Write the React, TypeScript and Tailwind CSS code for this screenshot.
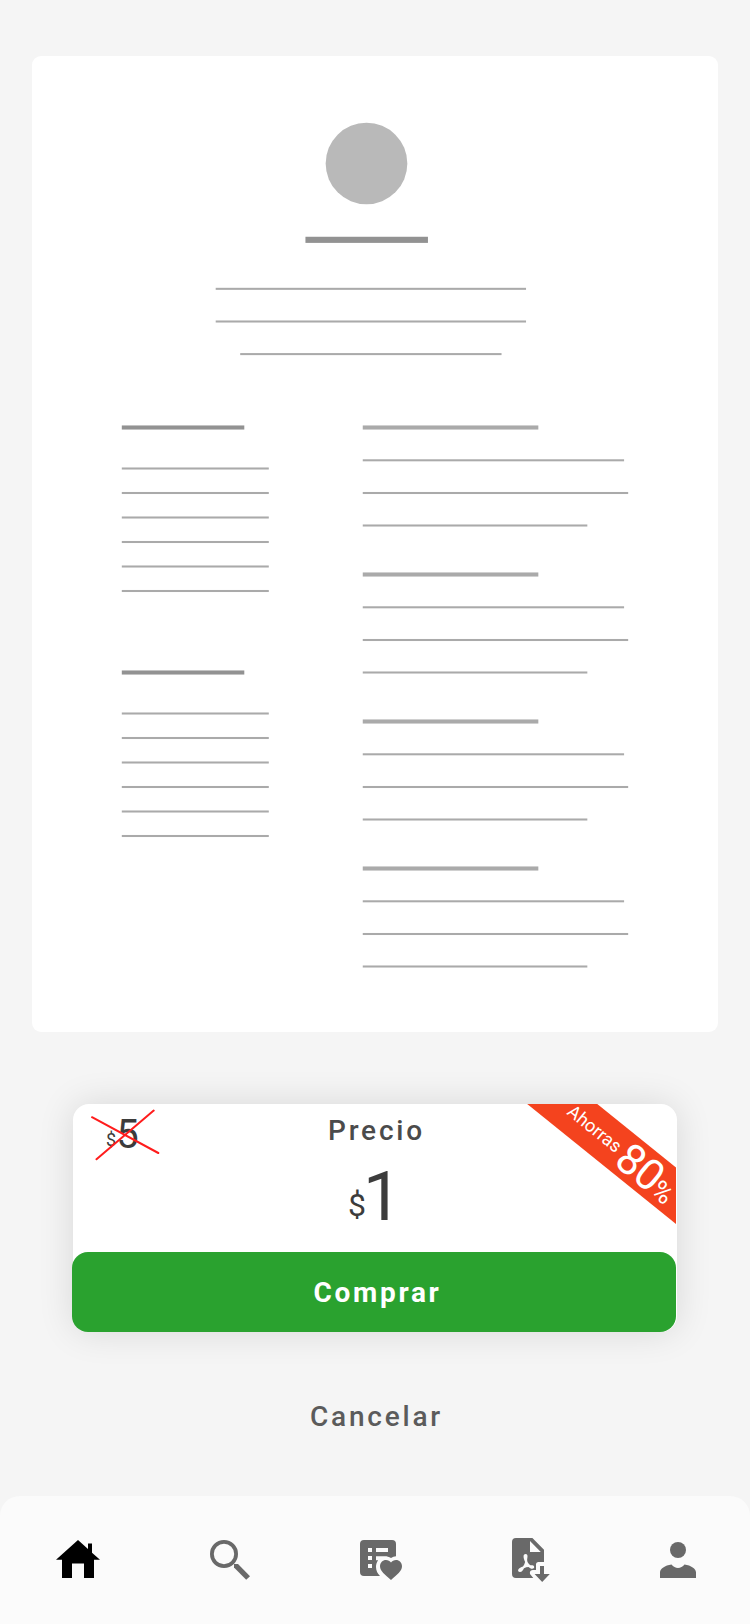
const U = 49 / 12;
const LEFT = 121.8;
const RIGHT = 362.75;

type BarProps = { x: number; y: number; w: number; h?: number; fill?: string };

function Bar({ x, y, w, h = 0.5, fill = "#aaaaaa" }: BarProps) {
  return <rect x={x} y={y - (h * U) / 2} width={w * U} height={h * U} fill={fill} />;
}

function ResumePreview() {
  return (
    <svg viewBox="32 56 686 976" width="686" height="976" className="block" aria-hidden="true">
      <circle cx="366.5" cy="163.5" r={10 * U} fill="#b9b9b9" />
      <Bar x={305.45} y={239.83} w={30} h={1.5} fill="#929292" />
      <Bar x={215.7} y={288.83} w={76} />
      <Bar x={215.7} y={321.5} w={76} />
      <Bar x={240.2} y={354.1} w={64} />
      {[427.5, 672.5].map((y) => (
        <g key={y}>
          <Bar x={LEFT} y={y} w={30} h={1} fill="#929292" />
          {[0, 1, 2, 3, 4, 5].map((i) => (
            <Bar key={i} x={LEFT} y={y + 41 + i * 24.5} w={36} />
          ))}
        </g>
      ))}
      {[427.5, 574.5, 721.5, 868.5].map((y) => (
        <g key={y}>
          <Bar x={RIGHT} y={y} w={43} h={1} />
          <Bar x={RIGHT} y={y + 32.8} w={64} />
          <Bar x={RIGHT} y={y + 65.5} w={65} />
          <Bar x={RIGHT} y={y + 98} w={55} />
        </g>
      ))}
    </svg>
  );
}

const icons = [
  {
    name: "Inicio",
    cls: "text-black",
    body: <path d="M28 10 6 29.700h6V48h10V33.500h12V48h10V29.700h6l-8-7V13.500h-4v5.500z" />,
  },
  {
    name: "Buscar",
    cls: "text-[#696969]",
    body: (
      <>
        <circle cx="24" cy="24" r="12.1" fill="none" stroke="currentColor" strokeWidth="3.8" />
        <path d="M34 34h4l12 12.200-3.800 3.600L34 37.500z" />
      </>
    ),
  },
  {
    name: "Favoritos",
    cls: "text-[#696969]",
    body: (
      <>
        <path
          fillRule="evenodd"
          d="M14 10h28a4 4 0 0 1 4 4v12.300a13 13 0 0 0-5 1.700c-2-1.200-4-1.700-6-1.700H26v4h2.200C26.600 32.400 26 34.800 26 37c0 3.500 1.500 6.500 4 9H14a4 4 0 0 1-4-4V14a4 4 0 0 1 4-4zM18 18v4h4v-4zm8 0v4h12v-4zm-8 8v4h4v-4zm0 8v4h4v-4z"
        />
        <path d="M41 50C35 44.600 30 41 30 36.200 30 32.700 32.700 30 36 30c2 0 3.900 1 5 2.500C42.100 31 44 30 46 30c3.300 0 6 2.700 6 6.200C52 41 47 44.600 41 50z" />
      </>
    ),
  },
  {
    name: "Descargas",
    cls: "text-[#696969]",
    body: (
      <>
        <path
          fillRule="evenodd"
          d="M16 8h16.400L44 19.800V32h-5.500q-2.500 0-2.500 2.500V40h-3.200c-2.800 0-3.800 3-2 5l2.500 3H16a4 4 0 0 1-4-4V12a4 4 0 0 1 4-4zM30 11v11h10.800z"
        />
        <path
          d="M25.500 24c1.900 0 2.300 1.700 1.900 3.600-.3 1.500-.4 2.600-.1 3.700.6 1.700 1.700 3.100 3.200 4 2.100-.1 3.700.2 3.700 1.700 0 1.700-1.900 2.200-3.900 1.200l-1.800-1.100c-1.500.1-3.100.5-4.500 1.100-.8 1.600-2 3.900-4.100 3.900-1.500 0-2.200-1.300-1.600-2.500.8-1.600 2.800-2.100 4.700-3 .9-1.400 1.700-3 2.100-4.700-1-2.300-1.800-4.500-1.500-6.100.2-1.100.9-1.800 1.900-1.800z"
          fill="#fbfbfb"
        />
        <path d="M40 36h4v8h5.800l-7.600 8-7.600-8H40z" />
      </>
    ),
  },
  {
    name: "Perfil",
    cls: "text-[#696969]",
    body: (
      <>
        <circle cx="28" cy="20" r="8" />
        <path d="M10 48v-5.500c0-4 5-7 11.500-8 3.500 4.500 9.500 4.500 13 0 6.500 1 11.500 4 11.500 8V48z" />
      </>
    ),
  },
];

export default function App() {
  return (
    <main className="flex h-[1624px] w-[750px] flex-col overflow-hidden bg-[#f5f5f5] pt-14 font-['Roboto',sans-serif]">
      <section className="mx-8 h-[976px] w-[686px] shrink-0 overflow-hidden rounded-[9px] bg-white">
        <ResumePreview />
      </section>

      <section className="relative ml-[73px] mt-[72px] h-[228px] w-[604px] shrink-0 rounded-[16px] bg-white shadow-[0_0_36px_rgba(0,0,0,0.12)]">
        <div className="flex h-[148px] flex-col items-center text-[#3c3c3c]">
          <h2 className="mt-[11px] pl-[3px] text-[28px] font-medium leading-8 tracking-[2.8px] text-[#4b4b4b]">Precio</h2>
          <p className="mt-[10px] flex h-[74px] items-baseline leading-[80px]">
            <span className="-translate-y-1 text-[32px]">$</span>
            <span className="-ml-[3px] text-[69px]">1</span>
          </p>
        </div>
        <button className="-ml-px flex h-20 w-[604px] items-center justify-center rounded-[16px] bg-[#2aa22f] pl-[7px] pt-[2px] text-[28px] font-bold tracking-[2.7px] text-white">
          Comprar
        </button>

        <div className="absolute left-[18px] top-[5px] h-[52px] w-[70px] text-[#3c3c3c]">
          <p className="flex items-baseline pl-[15px] pt-px leading-[50px]">
            <span className="-translate-y-0.5 text-[18px]">$</span>
            <span className="text-[40px]">5</span>
          </p>
          <svg viewBox="0 0 70 52" className="absolute inset-0" width="70" height="52">
            <path d="M1 8.200 67.300 44M62.700 1.600 5.500 50.300" stroke="#ff1c1c" strokeWidth="2" strokeLinecap="round" fill="none" />
          </svg>
        </div>

        <div className="absolute left-0 top-0 h-[148px] w-[603px] overflow-hidden">
          <div className="absolute left-[440.4px] top-[-68.3px] flex h-[43.7px] w-[300px] origin-top-left rotate-[38.9deg] items-start whitespace-nowrap bg-[#f4431e] pl-[90px] text-white">
            <span className="w-[67.6px] pt-[12px] text-[18.2px] leading-[18px]">Ahorras</span>
            <span className="pt-px text-[43px] leading-[43px] tracking-[-0.7px]">
              80<span className="text-[27px]">%</span>
            </span>
          </div>
        </div>
      </section>

      <button className="mt-[69px] h-8 self-center pl-[3px] text-[28px] font-medium leading-8 tracking-[2.8px] text-[#5b5b5b]">Cancelar</button>

      <nav className="mt-auto flex h-32 shrink-0 justify-between rounded-t-[20px] bg-[#fbfbfb] pl-[50px] pr-[44px] pt-[34px]">
        {icons.map((icon) => (
          <a key={icon.name} aria-label={icon.name} className={icon.cls}>
            <svg viewBox="0 0 56 56" width="56" height="56" fill="currentColor">
              {icon.body}
            </svg>
          </a>
        ))}
      </nav>
    </main>
  );
}
